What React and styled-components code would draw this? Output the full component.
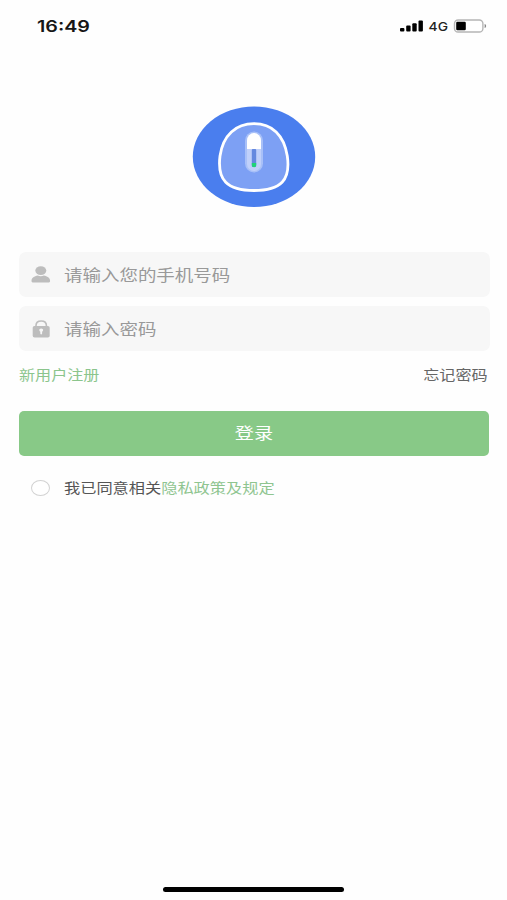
import React from 'react';
import styled, { createGlobalStyle } from 'styled-components';

const GlobalStyle = createGlobalStyle`
  * {
    box-sizing: border-box;
  }
  body {
    margin: 0;
    background: #fefefe;
    font-family: "Liberation Sans", "Noto Sans CJK SC", sans-serif;
  }
`;

const Screen = styled.div`
  display: flex;
  flex-direction: column;
  height: 900px;
  overflow: hidden;
`;

const StatusBar = styled.header`
  display: flex;
  align-items: center;
  justify-content: space-between;
  height: 52px;
  padding: 0 20px 0 37px;
`;

// extended lettering, grows from the given side
const Wide = styled.span`
  display: inline-block;
  white-space: nowrap;
  transform: scaleX(${({ $x }) => $x || 1.2});
  transform-origin: ${({ $from }) => $from || 'left'} center;
`;

const Clock = styled(Wide)`
  font: 600 16px/20px Inter, sans-serif;
  color: #161616;
`;

const StatusIcons = styled.div`
  display: flex;
  align-items: center;
`;

const Network = styled(Wide)`
  width: 29px;
  padding: 1px 0 0 4px;
  font: 500 12px/16px Inter, sans-serif;
  color: #222;
`;

const LogoArea = styled.div`
  display: flex;
  justify-content: center;
  height: 200px;
  padding: 54px 0 0 1px;
`;

const Form = styled.main`
  display: flex;
  flex-direction: column;
  flex: 1;
  padding: 0 17px 0 19px;
`;

const Field = styled.label`
  display: flex;
  align-items: center;
  height: 45px;
  margin: 0 0 9px;
  padding: 1px 0 0 12px;
  border-radius: 7px;
  background: #f7f7f7;
  font-size: 15.4px;
  line-height: 22px;
  color: #999;

  svg {
    flex: none;
    margin-right: 13px;
  }

  span {
    padding-top: 1px;
  }
`;

const Links = styled.div`
  display: flex;
  justify-content: space-between;
  height: 51px;
  padding: 6px 2px 0 0;
  font-size: 13.4px;
  line-height: 20px;
`;

const Link = styled(Wide)`
  color: ${({ $green }) => ($green ? '#8bc58c' : '#666')};
`;

const LoginButton = styled.button`
  height: 45px;
  margin-right: 1px;
  padding: 1px 0 0;
  border: 0;
  border-radius: 5px;
  background: #88c987;
  font-family: inherit;
  font-size: 16px;
  line-height: 24px;
  color: #fff;
`;

const Agreement = styled.label`
  display: flex;
  align-items: center;
  height: 20px;
  margin-top: 22px;
  padding-left: 12px;
  font-size: 13.5px;
  line-height: 20px;
  color: #555;

  > span:last-child {
    padding-top: 2px;
  }

  em {
    font-style: normal;
    color: #8fc590;
  }
`;

const Radio = styled.span`
  width: 19px;
  height: 16px;
  margin-right: 14px;
  border: 1px solid #d2d2d2;
  border-radius: 50%;
  background: #fff;
`;

const HomeIndicator = styled.div`
  align-self: center;
  width: 181px;
  height: 5px;
  margin-bottom: 8px;
  border-radius: 3px;
  background: #000;
`;

const SignalIcon = () => (
  <svg width="24" height="14" viewBox="0 0 24 14">
    <rect x="0" y="9" width="4.4" height="3.6" rx="1" />
    <rect x="6.2" y="6.5" width="4.4" height="6" rx="1" />
    <rect x="12.3" y="4.2" width="4.4" height="8.3" rx="1" />
    <rect x="18.5" y="1.5" width="4.4" height="11" rx="1" />
  </svg>
);

const BatteryIcon = () => (
  <svg width="34" height="14" viewBox="0 0 34 14">
    <rect x="1.5" y="1" width="28.4" height="12" rx="3.6" fill="#fff" stroke="#b5b5b5" strokeWidth="1.4" />
    <rect x="3.2" y="2.8" width="9.6" height="8.4" rx="1.2" />
    <path d="M31.6 5v4c2-.5 2-3.5 0-4z" fill="#888" />
  </svg>
);

const Logo = () => (
  <svg width="124" height="102" viewBox="0 0 124 102">
    <ellipse cx="62" cy="50.7" rx="61.2" ry="50.3" fill="#4a7eee" />
    <path
      d="M62 17.7C80 17.7 92 29 95.300 50C98.800 74 89 84.500 62 84.500S25 74 28 50C31 29 44 17.700 62 17.700Z"
      fill="#7da0f4"
      stroke="#fff"
      strokeWidth="2.8"
    />
    <rect x="53" y="25.5" width="18" height="41" rx="9" fill="#a8c0f8" />
    <path d="M55 43V34.5a7 7.5 0 0 1 14 0V43z" fill="#fff" />
    <path d="M55 43h14v15a7 7 0 0 1-14 0z" fill="#c0d0fa" />
    <rect x="59.8" y="43" width="4.4" height="18" rx="1" fill="#6589df" />
    <path d="M59.8 57h4.4v2a2.2 2.2 0 0 1-4.4 0z" fill="#20d477" />
  </svg>
);

const UserIcon = () => (
  <svg width="20" height="18" viewBox="0 0 20 18" fill="#bdbdbd">
    <ellipse cx="9.8" cy="4.6" rx="5.5" ry="4.3" />
    <path d="M.5 15C.5 11.8 3.3 10.2 6.8 9.6c1.8.8 4.2.8 6 0 3.5.6 6.3 2.2 6.3 5.4 0 1-.9 1.6-2.2 1.6H2.7C1.4 16.6.5 16 .5 15z" />
  </svg>
);

const LockIcon = () => (
  <svg width="20" height="18" viewBox="0 0 20 18">
    <path d="M5 8V5.6C5 2.8 7 1 10.2 1S15.4 2.8 15.4 5.6V8" fill="none" stroke="#bdbdbd" strokeWidth="1.6" />
    <rect x="1.7" y="6" width="17" height="11.5" rx="1.8" fill="#bdbdbd" />
    <ellipse cx="10.2" cy="10" rx="2" ry="1.6" fill="#f7f7f7" />
    <rect x="9.3" y="10.5" width="1.8" height="3.9" rx=".8" fill="#f7f7f7" />
  </svg>
);

const App = () => {
  return (
    <Screen>
      <GlobalStyle />
      <StatusBar>
        <Clock $x={1.23}>16:49</Clock>
        <StatusIcons>
          <SignalIcon />
          <Network $x={1.15}>4G</Network>
          <BatteryIcon />
        </StatusIcons>
      </StatusBar>
      <LogoArea>
        <Logo />
      </LogoArea>
      <Form>
        <Field>
          <UserIcon />
          <Wide>请输入您的手机号码</Wide>
        </Field>
        <Field>
          <LockIcon />
          <Wide>请输入密码</Wide>
        </Field>
        <Links>
          <Link $green>新用户注册</Link>
          <Link $from="right">忘记密码</Link>
        </Links>
        <LoginButton>
          <Wide $from="center">登录</Wide>
        </LoginButton>
        <Agreement>
          <Radio />
          <Wide>
            我已同意相关<em>隐私政策及规定</em>
          </Wide>
        </Agreement>
      </Form>
      <HomeIndicator />
    </Screen>
  );
};

export default App;
